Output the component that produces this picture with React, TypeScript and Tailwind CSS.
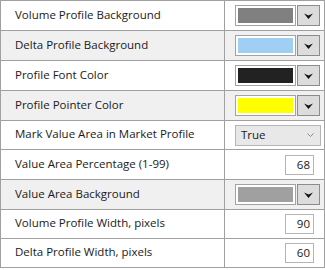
import React from 'react';

type Row =
  | { label: string; kind: 'color'; color: string; shaded?: boolean; h: number }
  | { label: string; kind: 'select'; value: string; shaded?: boolean; h: number }
  | { label: string; kind: 'number'; value: string; shaded?: boolean; h: number };

const rows: Row[] = [
  { label: 'Volume Profile Background', kind: 'color', color: '#808080', h: 29 },
  { label: 'Delta Profile Background', kind: 'color', color: '#9fcff2', shaded: true, h: 29 },
  { label: 'Profile Font Color', kind: 'color', color: '#222222', h: 29 },
  { label: 'Profile Pointer Color', kind: 'color', color: '#ffff00', shaded: true, h: 29 },
  { label: 'Mark Value Area in Market Profile', kind: 'select', value: 'True', h: 28 },
  { label: 'Value Area Percentage (1-99)', kind: 'number', value: '68', h: 29 },
  { label: 'Value Area Background', kind: 'color', color: '#a0a0a0', shaded: true, h: 29 },
  { label: 'Volume Profile Width, pixels', kind: 'number', value: '90', h: 28 },
  { label: 'Delta Profile Width, pixels', kind: 'number', value: '60', h: 28 },
];

// notched arrowhead used on the color dropdown buttons
const ArrowDown = () => (
  <svg width="9" height="6" viewBox="0 0 9 6">
    <path d="M0 0.5 L4.5 2.5 L9 0.5 L4.5 6 Z" fill="#111" />
  </svg>
);

const ColorPicker = ({ color }: { color: string }) => (
  <div className="flex h-[21px] w-[85px]">
    <div className="flex-1 border border-[#a3a3a3] bg-white p-[2px]">
      <div className="h-full w-full" style={{ backgroundColor: color }} />
    </div>
    <div className="ml-px flex w-[23px] items-center justify-center border border-[#8c8c8c] bg-[#dcdcdc]">
      <ArrowDown />
    </div>
  </div>
);

const SelectBox = ({ value }: { value: string }) => (
  <div className="flex h-[21px] w-[86px] items-center justify-between border border-[#b5b5b5] bg-[#e8e8e8] pl-[5px] pr-[6px]">
    <span>{value}</span>
    <svg width="7" height="4" viewBox="0 0 7 4">
      <path d="M0.5 0.5 L3.5 3.5 L6.5 0.5" fill="none" stroke="#8a8a8a" strokeWidth="1" />
    </svg>
  </div>
);

const NumberBox = ({ value }: { value: string }) => (
  <div className="ml-auto mr-[10px] flex h-[20px] w-[29px] items-center justify-end border border-[#b5b5b5] bg-white pr-[3px]">
    {value}
  </div>
);

export default function App() {
  return (
    <div
      className="w-[325px] border-l border-t border-[#a0a0a0] bg-white text-[11.5px] text-[#1a1a1a]"
      style={{ fontFamily: '"Open Sans", "Noto Sans", sans-serif' }}
    >
      {rows.map((r) => (
        <div
          key={r.label}
          className={`flex border-b border-r border-[#a0a0a0] ${r.shaded ? 'bg-[#f0f0f0]' : 'bg-white'}`}
          style={{ height: r.h + 1 }}
        >
          <div className="flex w-[224px] items-center border-r border-[#a0a0a0] pl-[14px] pb-[2px]">
            {r.label}
          </div>
          <div className="flex flex-1 items-center pl-[10px]">
            {r.kind === 'color' && <ColorPicker color={r.color} />}
            {r.kind === 'select' && <SelectBox value={r.value} />}
            {r.kind === 'number' && <NumberBox value={r.value} />}
          </div>
        </div>
      ))}
    </div>
  );
}
